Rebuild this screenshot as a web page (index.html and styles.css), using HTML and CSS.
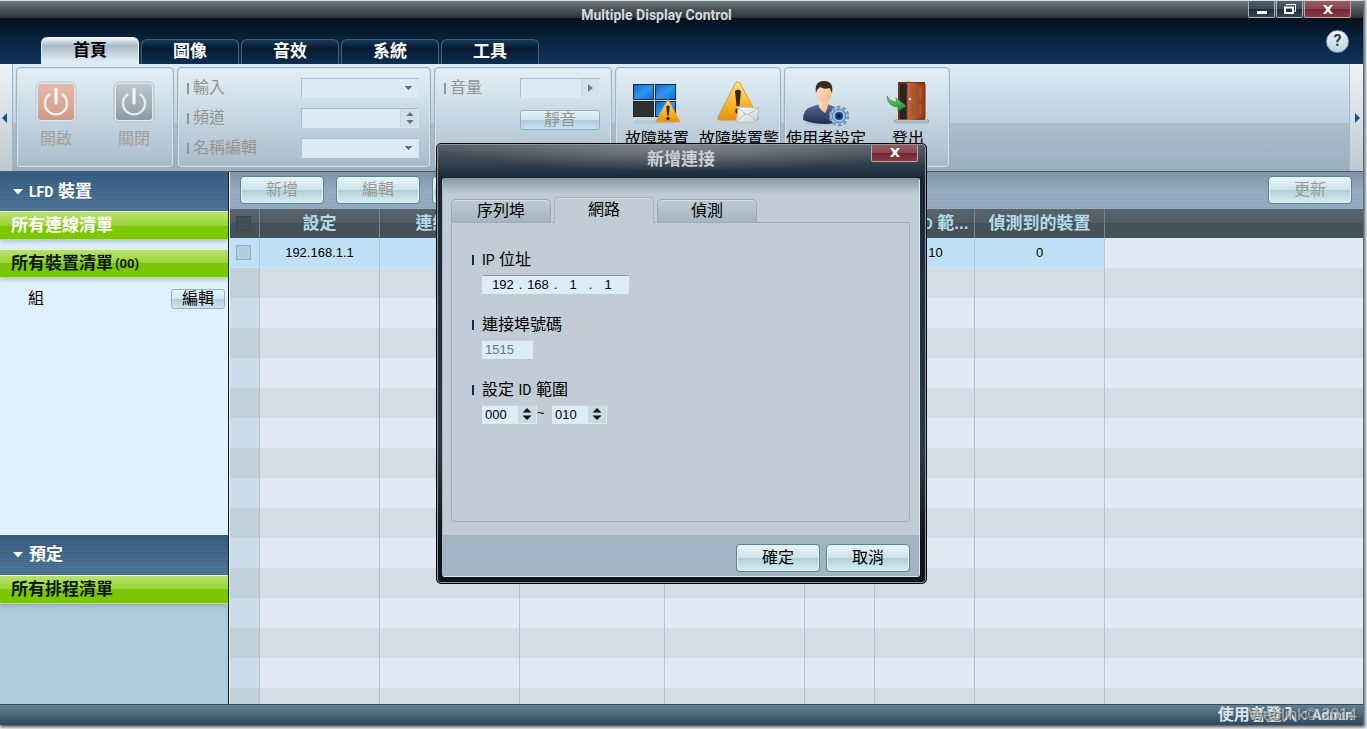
FILE: index.html
```html
<!DOCTYPE html>
<html lang="zh-Hant">
<head>
<meta charset="utf-8">
<title>Multiple Display Control</title>
<link rel="stylesheet" href="styles.css">
</head>
<body>
<div class="app">
  <header class="titlebar">
    <h1 class="app-title">Multiple Display Control</h1>
    <div class="window-buttons">
      <button class="win-btn" aria-label="Minimize"><svg width="12" height="12" viewBox="0 0 12 12"><path d="M1 8h10v3H1z" fill="#fff"/></svg></button>
      <button class="win-btn" aria-label="Restore"><svg width="14" height="12" viewBox="0 0 14 12"><path d="M3.500 2.500V1.500H12.500V8.500H11.500" fill="none" stroke="#fff"/><path d="M2 4.500h8v5.500H2z" fill="none" stroke="#fff" stroke-width="2"/></svg></button>
      <button class="win-btn win-close" aria-label="Close"><svg width="10" height="9" viewBox="0 0 10 9"><path d="M0 0h3l2 2.500L7 0h3L6.600 4.500 10 9H7L5 6.500 3 9H0l3.400-4.500z" fill="#fff"/></svg></button>
    </div>
  </header>

  <nav class="tabbar">
    <div class="tabs">
      <button class="tab tab-active">首頁</button>
      <button class="tab">圖像</button>
      <button class="tab">音效</button>
      <button class="tab">系統</button>
      <button class="tab">工具</button>
    </div>
    <button class="help" aria-label="Help">?</button>
  </nav>

  <section class="ribbon">
    <button class="scroll scroll-left" aria-label="Previous"><svg width="5" height="10" viewBox="0 0 5 10"><path d="M5 0v10L0 5z" fill="#1a5580"/></svg></button>
    <div class="groups">
      <div class="group power-group">
        <button class="tool" disabled>
          <svg width="42" height="42" viewBox="0 0 42 42">
            <defs><linearGradient id="on" x2="0" y2="1"><stop stop-color="#e6bba5"/><stop offset="1" stop-color="#d0988a"/></linearGradient></defs>
            <rect x="1" y="1" width="40" height="40" rx="5" fill="#dce6ec" stroke="#bccad4"/>
            <rect x="3" y="3" width="36" height="36" rx="3" fill="url(#on)"/>
            <path d="M14.500 13.500a11 11 0 1 0 13 0" fill="none" stroke="#f5eeec" stroke-width="2.500" stroke-linecap="round"/>
            <path d="M21 8v14" stroke="#fff" stroke-width="3" stroke-linecap="round"/>
          </svg>
          <span>開啟</span>
        </button>
        <button class="tool" disabled>
          <svg width="42" height="42" viewBox="0 0 42 42">
            <defs><linearGradient id="off" x2="0" y2="1"><stop stop-color="#bcc7cf"/><stop offset="1" stop-color="#8c9aa5"/></linearGradient></defs>
            <rect x="1" y="1" width="40" height="40" rx="5" fill="#dce6ec" stroke="#b0bfca"/>
            <rect x="3" y="3" width="36" height="36" rx="3" fill="url(#off)"/>
            <path d="M14.500 13.500a11 11 0 1 0 13 0" fill="none" stroke="#e4eaee" stroke-width="2.500" stroke-linecap="round"/>
            <path d="M21 8v14" stroke="#f4f8fa" stroke-width="3" stroke-linecap="round"/>
          </svg>
          <span>關閉</span>
        </button>
      </div>

      <div class="group input-group">
        <label for="source">輸入</label>
        <select id="source" class="field drop" disabled><option></option></select>
        <label for="channel">頻道</label>
        <div class="field spin-field">
          <input id="channel" type="text" disabled>
          <span class="spin"><svg width="8" height="14" viewBox="0 0 8 14"><path d="M4 1l3.500 4h-7zM4 13l3.500-4h-7z" fill="#5f727f"/></svg></span>
        </div>
        <label for="rename">名稱編輯</label>
        <select id="rename" class="field drop" disabled><option></option></select>
      </div>

      <div class="group volume-group">
        <label for="volume">音量</label>
        <div class="field spin-field">
          <input id="volume" type="text" disabled>
          <span class="spin"><svg width="6" height="8" viewBox="0 0 6 8"><path d="M0 0l5 4-5 4z" fill="#6f7f8a"/></svg></span>
        </div>
        <button class="mute" disabled>靜音</button>
      </div>

      <div class="group">
        <button class="tool">
          <svg width="48" height="44" viewBox="0 0 48 44">
            <defs>
              <linearGradient id="blue" x2="1" y2="1"><stop stop-color="#1560c8"/><stop offset=".5" stop-color="#2d96f2"/><stop offset="1" stop-color="#0a6fdc"/></linearGradient>
              <linearGradient id="amber" x2="0" y2="1"><stop stop-color="#ffe28a"/><stop offset=".6" stop-color="#f9b526"/><stop offset="1" stop-color="#e98a0c"/></linearGradient>
            </defs>
            <path d="M1 39h40v4H1z" fill="#aebfcb" opacity=".45"/>
            <g stroke="#14263a"><rect x=".5" y="3.500" width="20" height="15" fill="url(#blue)"/><rect x="22.500" y="3.500" width="20" height="15" fill="url(#blue)"/><rect x=".5" y="20.500" width="20" height="15" fill="#303030"/><rect x="22.500" y="20.500" width="20" height="15" fill="url(#blue)"/></g>
            <path d="M35 18.500L47 41H22.500z" fill="url(#amber)" stroke="#e7a534" stroke-linejoin="round"/>
            <path d="M33.200 25.500q1.800-2 3.600 0l-1 9h-1.600z" fill="#33291b"/><circle cx="35" cy="37.500" r="1.700" fill="#33291b"/>
          </svg>
          <span>故障裝置</span>
        </button>
        <button class="tool">
          <svg width="48" height="44" viewBox="0 0 48 44">
            <defs><linearGradient id="mail" x2="1" y2="1"><stop stop-color="#fff"/><stop offset="1" stop-color="#c9d1d8"/></linearGradient></defs>
            <path d="M6 40l5 3 4-3 8 3h15l4-3z" fill="#d2c9a8" opacity=".55"/>
            <path d="M22 1q2-1 3 1l18 34q1 3-1 3H4q-2 0-1-3L20 3z" fill="url(#amber)" stroke="#d99b35"/>
            <path d="M20 10q3-3 6 0l-1.500 15h-3z" fill="#342817"/><circle cx="23" cy="30" r="2.700" fill="#342817"/>
            <path d="M23 26l21 1-2 12q-1 2-3 2H21q2-8 2-15z" fill="url(#mail)" stroke="#b8c0c6"/>
            <path d="M23 27l9 7 12-7M21 41l9-8M41 40l-7-7" fill="none" stroke="#b4bcc2"/>
          </svg>
          <span>故障裝置警</span>
        </button>
      </div>

      <div class="group">
        <button class="tool">
          <svg width="48" height="46" viewBox="0 0 48 46">
            <defs>
              <linearGradient id="coat" x2="0" y2="1"><stop stop-color="#5a6e95"/><stop offset="1" stop-color="#1d2c50"/></linearGradient>
              <linearGradient id="skin" x2="1" y2="1"><stop stop-color="#ffe6c4"/><stop offset="1" stop-color="#eeb787"/></linearGradient>
            </defs>
            <ellipse cx="20" cy="42" rx="17" ry="3" fill="#99aec0" opacity=".4"/>
            <path d="M1 39q0-11 8-13l8-3h8l8 3q6 3 7 13-7 4-17 4-12 0-22-4z" fill="url(#coat)"/>
            <path d="M17 18h9v6q-1 6-3 8-6-4-7-9z" fill="url(#skin)"/>
            <ellipse cx="22" cy="12" rx="7.500" ry="10" fill="url(#skin)"/>
            <path d="M14 12Q12 0 22 0q10 0 8 12-1-1-2-5-6 2-10-1-3 2-4 6z" fill="#3c2b20"/>
            <circle cx="37" cy="35" r="9" fill="#dae5ee" stroke="#8097aa" stroke-width="2.500" stroke-dasharray="3.700 2"/>
            <circle cx="37" cy="35" r="7" fill="#8dbde8" stroke="#3a78b2"/><circle cx="37" cy="35" r="4" fill="#1d4677"/><circle cx="37" cy="35" r="2" fill="#0b1c31"/>
          </svg>
          <span>使用者設定</span>
        </button>
        <button class="tool">
          <svg width="44" height="44" viewBox="0 0 44 44">
            <defs>
              <linearGradient id="wood" x2="1" y2="0"><stop stop-color="#c86c3e"/><stop offset="1" stop-color="#8b3a1b"/></linearGradient>
              <linearGradient id="leaf" x2="0" y2="1"><stop stop-color="#7ae07d"/><stop offset="1" stop-color="#13832c"/></linearGradient>
            </defs>
            <path d="M10 40h32v3H12z" fill="#a9b9c6" opacity=".5"/>
            <path d="M12 1h27v38H12z" fill="#6e3016"/><path d="M14 3h9v35h-9z" fill="#252526"/>
            <path d="M21 1l18 2v34l-18 3z" fill="url(#wood)" stroke="#86371a"/>
            <path d="M25 5l4 .5v12.500L25 19zM33 6l3 .5v11.500L33 18zM25 24l4-.5V34l-4 .5zM33 23h3v10l-3 .5z" fill="#aa5530"/>
            <circle cx="24" cy="18" r="1.300" fill="#fbe4ba"/>
            <path d="M9 39h33l1 2H8z" fill="#d9dde1" stroke="#77848f" stroke-width=".7"/>
            <path d="M1 15q3 6 10 6l-1-4 10 8-8 5v-4Q2 26 1 15z" fill="url(#leaf)" stroke="#2b8d3b" stroke-width=".7"/>
          </svg>
          <span>登出</span>
        </button>
      </div>
    </div>
    <button class="scroll scroll-right" aria-label="Next"><svg width="5" height="10" viewBox="0 0 5 10"><path d="M0 0v10l5-5z" fill="#1a5580"/></svg></button>
  </section>

  <div class="workspace">
    <aside class="sidebar">
      <section class="devices">
        <h2 class="side-title"><svg width="10" height="6" viewBox="0 0 10 6"><path d="M0 0h10L5 5.500z" fill="#fff"/></svg><span><span class="latin">LFD</span> 裝置</span></h2>
        <a class="green green-light" href="#">所有連線清單</a>
        <a class="green" href="#">所有裝置清單<span class="count">(00)</span></a>
        <div class="group-row"><span>組</span><button class="small-btn">編輯</button></div>
      </section>
      <section class="schedule">
        <h2 class="side-title"><svg width="10" height="6" viewBox="0 0 10 6"><path d="M0 0h10L5 5.500z" fill="#fff"/></svg>預定</h2>
        <a class="green" href="#">所有排程清單</a>
      </section>
    </aside>

    <main class="content">
      <div class="toolbar">
        <button class="btn" disabled>新增</button>
        <button class="btn" disabled>編輯</button>
        <button class="btn" disabled>刪除</button>
        <button class="btn refresh" disabled>更新</button>
      </div>
      <div class="table-wrap">
        <table class="grid">
          <colgroup><col class="c30"><col class="c120"><col class="c140"><col class="c145"><col class="c140"><col class="c70"><col class="c100"><col class="c130"><col></colgroup>
          <thead><tr><th><input type="checkbox" aria-label="全選" disabled></th><th>設定</th><th>連線類型</th><th></th><th></th><th></th><th>設定 <span class="latin">ID</span> 範...</th><th>偵測到的裝置</th><th></th></tr></thead>
          <tbody>
            <tr class="selected"><td><input type="checkbox" aria-label="192.168.1.1" disabled></td><td>192.168.1.1</td><td></td><td></td><td></td><td></td><td>0 ~ 10</td><td>0</td><td></td></tr>
            <tr><td></td><td></td><td></td><td></td><td></td><td></td><td></td><td></td><td></td></tr>
            <tr><td></td><td></td><td></td><td></td><td></td><td></td><td></td><td></td><td></td></tr>
            <tr><td></td><td></td><td></td><td></td><td></td><td></td><td></td><td></td><td></td></tr>
            <tr><td></td><td></td><td></td><td></td><td></td><td></td><td></td><td></td><td></td></tr>
            <tr><td></td><td></td><td></td><td></td><td></td><td></td><td></td><td></td><td></td></tr>
            <tr><td></td><td></td><td></td><td></td><td></td><td></td><td></td><td></td><td></td></tr>
            <tr><td></td><td></td><td></td><td></td><td></td><td></td><td></td><td></td><td></td></tr>
            <tr><td></td><td></td><td></td><td></td><td></td><td></td><td></td><td></td><td></td></tr>
            <tr><td></td><td></td><td></td><td></td><td></td><td></td><td></td><td></td><td></td></tr>
            <tr><td></td><td></td><td></td><td></td><td></td><td></td><td></td><td></td><td></td></tr>
            <tr><td></td><td></td><td></td><td></td><td></td><td></td><td></td><td></td><td></td></tr>
            <tr><td></td><td></td><td></td><td></td><td></td><td></td><td></td><td></td><td></td></tr>
            <tr><td></td><td></td><td></td><td></td><td></td><td></td><td></td><td></td><td></td></tr>
            <tr><td></td><td></td><td></td><td></td><td></td><td></td><td></td><td></td><td></td></tr>
            <tr><td></td><td></td><td></td><td></td><td></td><td></td><td></td><td></td><td></td></tr>
          </tbody>
        </table>
      </div>
    </main>
  </div>

  <footer class="statusbar">
    <span class="login">使用者登入 : <span class="latin">Admin</span></span>
    <span class="watermark">Weblink© 2014</span>
  </footer>

  <div class="overlay">
    <form class="dialog" role="dialog" aria-labelledby="dialog-title">
      <div class="dialog-head">
        <h2 id="dialog-title">新增連接</h2>
        <button type="button" class="win-btn win-close dialog-close" aria-label="關閉"><svg width="10" height="9" viewBox="0 0 10 9"><path d="M0 0h3l2 2.500L7 0h3L6.600 4.500 10 9H7L5 6.500 3 9H0l3.400-4.500z" fill="#fff"/></svg></button>
      </div>
      <div class="dialog-inner">
        <div class="dialog-body">
          <div class="dtabs">
            <button type="button" class="dtab">序列埠</button>
            <button type="button" class="dtab dtab-active">網路</button>
            <button type="button" class="dtab">偵測</button>
          </div>
          <div class="panel">
            <div class="form-row">
              <label for="ip1"><span class="latin">IP</span> 位址</label>
              <div class="ip">
                <input id="ip1" value="192"><span>.</span><input aria-label="IP 2" value="168"><span>.</span><input aria-label="IP 3" value="1"><span>.</span><input aria-label="IP 4" value="1">
              </div>
            </div>
            <div class="form-row">
              <label for="port">連接埠號碼</label>
              <input id="port" class="port" value="1515" disabled>
            </div>
            <div class="form-row">
              <label for="from">設定 <span class="latin">ID</span> 範圍</label>
              <div class="range">
                <div class="num"><input id="from" value="000"><span class="num-spin"><svg width="10" height="14" viewBox="0 0 10 14"><path d="M5 1l4.500 4.500h-9zM5 13l4.500-4.500h-9z" fill="#0c1418"/></svg></span></div>
                <span class="tilde">~</span>
                <div class="num"><input aria-label="ID" value="010"><span class="num-spin"><svg width="10" height="14" viewBox="0 0 10 14"><path d="M5 1l4.500 4.500h-9zM5 13l4.500-4.500h-9z" fill="#0c1418"/></svg></span></div>
              </div>
            </div>
          </div>
        </div>
        <div class="dialog-foot">
          <button type="button" class="btn">確定</button>
          <button type="button" class="btn">取消</button>
        </div>
      </div>
    </form>
  </div>
</div>
</body>
</html>
```

FILE: styles.css
```css
* { box-sizing: border-box; }

body {
  margin: 0;
  padding: 0 4px 4px 0;
  height: 100vh;
  overflow: hidden;
  background: #f2f3f4;
  font-family: "Liberation Sans", "Noto Sans CJK TC", sans-serif;
  font-size: 16px;
  line-height: 20px;
  color: #000;
}

button, input, select { font: inherit; color: inherit; margin: 0; padding: 0; border: 0; }
h1, h2 { margin: 0; font-size: 17px; }
svg { display: block; flex: none; }
a { color: inherit; text-decoration: none; }
.latin { font-family: Roboto, sans-serif; font-size: 14px; }

.app {
  position: relative;
  display: flex;
  flex-direction: column;
  height: 100%;
  border-top: 1px solid #d4e2e8;
  box-shadow: 1px 1px 3px 1px #4c5054;
}

/* Title bar */
.titlebar {
  display: grid;
  height: 17px;
  background: linear-gradient(#727b80, #4b5357 50%, #2b3135);
}
.titlebar > * { grid-area: 1 / 1; }
.app-title {
  padding-right: 50px;
  text-align: center;
  font: bold 14px/28px Roboto, sans-serif;
  color: #d5dadd;
  z-index: 1;
}
.window-buttons { display: flex; justify-self: end; gap: 1px; margin-right: 12px; z-index: 2; }
.win-btn {
  display: flex;
  align-items: center;
  justify-content: center;
  width: 27px;
  height: 17px;
  border: 1px solid #a7b2ba;
  border-top: 0;
  border-radius: 0 0 2px 2px;
  background: linear-gradient(#52606c, #3a4855 50%, #1e2c38 50%, #344351);
}
.win-close { width: 47px; background: linear-gradient(#9a5a62, #8a4750 50%, #6f2730 50%, #8b3b45); border-color: #c0a2a6; }

/* Main tabs */
.tabbar {
  display: flex;
  justify-content: space-between;
  align-items: flex-end;
  height: 46px;
  padding: 0 14px 0 41px;
  background: linear-gradient(#03101c, #0a2747 60%, #0f3459);
}
.tabs { display: flex; align-items: flex-end; gap: 2px; }
.tab {
  width: 98px;
  height: 25px;
  border: 1px solid #44617c;
  border-bottom: 0;
  border-radius: 6px 6px 0 0;
  background: linear-gradient(#1b3a59, #061a30 35%, #0d2f51);
  color: #fff;
  font-size: 17px;
  font-weight: bold;
  line-height: 20px;
}
.tab-active { height: 27px; border-color: #e5f0f6; background: linear-gradient(#f0f7fa, #a9bac7 30%, #dce8f0 85%, #dcedf7); color: #000; }
.help {
  align-self: center;
  width: 23px;
  height: 23px;
  border: 1px solid #83a0b3;
  border-radius: 50%;
  background: linear-gradient(#f3f8fa, #bfd0da);
  color: #33444f;
  font: bold 16px/20px Roboto, sans-serif;
}

/* Ribbon */
.ribbon {
  display: flex;
  height: 107px;
  background: linear-gradient(#dcedf7, #bccfdd 55%, #adbecb 55%, #9bafbe);
}
.groups { display: flex; flex: 1; gap: 3px; padding: 3px 0 3px 3px; }
.scroll { display: flex; align-items: center; width: 13px; background: linear-gradient(#ecf4f8, #bdc9d2); }
.scroll-left { padding-left: 2px; border-right: 1px solid #a4b6c4; }
.scroll-right { width: 14px; padding-left: 5px; border-left: 1px solid #a4b6c4; }
.group {
  display: flex;
  border: 1px solid #a0b3c2;
  border-radius: 4px;
  box-shadow: inset 0 0 0 1px #d2e1ea;
  background: linear-gradient(#e3f0f7, #c3d4e0 55%, #a9bbc9);
}
.tool {
  display: flex;
  flex-direction: column;
  align-items: center;
  justify-content: space-between;
  width: 82px;
  height: 81px;
  padding-top: 13px;
  background: none;
  white-space: nowrap;
}
.tool span { line-height: 20px; }
.tool:disabled { color: #a19f98; }
.power-group .tool { width: 78px; }
.input-group {
  display: grid;
  grid-template-columns: 114px 118px;
  grid-auto-rows: 30px;
  align-items: center;
  width: 254px;
  padding: 5px 9px;
}
.ribbon label { display: flex; align-items: center; gap: 4px; color: #96968f; }
.ribbon label::before { content: ""; width: 2px; height: 11px; background: #8b969e; }
.field {
  height: 20px;
  border: 1px solid #a9bfce;
  border-right-color: #d8e6ef;
  border-bottom-color: #d8e6ef;
  background-color: #dceaf6;
}
.drop {
  appearance: none;
  width: 118px;
  background-image: linear-gradient(to bottom right, #5f727f 50%, transparent 50%), linear-gradient(to bottom left, #5f727f 50%, transparent 50%);
  background-position: right 5px center, right 9px center;
  background-size: 4px 4px;
  background-repeat: no-repeat;
  opacity: 1;
}
.spin-field { display: flex; }
.spin-field input { flex: 1; min-width: 0; background: none; }
.spin { display: flex; align-items: center; justify-content: center; width: 18px; border-left: 1px solid #c6d5df; background: #d3e0e9; }
.volume-group {
  display: grid;
  grid-template-columns: 76px 80px;
  grid-template-rows: 30px 34px;
  align-items: center;
  width: 178px;
  padding: 5px 9px;
}
.mute {
  grid-column: 2;
  height: 20px;
  border: 1px solid #8eb1c4;
  border-radius: 3px;
  background: linear-gradient(#e2f0f7, #d2e6ef 50%, #accbdb 50%, #c5e2ee);
  color: #96968f;
  line-height: 18px;
}

/* Workspace */
.workspace { display: flex; flex: 1; min-height: 0; border-top: 1px solid #4c6072; }
.sidebar { display: flex; flex-direction: column; width: 229px; border-right: 1px solid #10181e; background: #dff1ff; }
.devices { flex: 1; }
.schedule { height: 169px; background: #b0cbd9; }
.side-title {
  display: flex;
  align-items: center;
  gap: 6px;
  height: 39px;
  padding-left: 13px;
  background: repeating-linear-gradient(transparent 0 1px, rgba(20, 50, 80, .16) 1px 2px), linear-gradient(#375f84, #54799b);
  color: #fff;
}
.schedule .side-title { height: 40px; }
.green {
  display: flex;
  align-items: center;
  height: 29px;
  padding-left: 11px;
  border-top: 1px solid #e8f5c8;
  border-bottom: 1px solid #b9dc8c;
  background: linear-gradient(#b9e26f, #98d336 50%, #7cc807 50%, #7ac700);
  box-shadow: 0 2px 4px rgba(90, 120, 140, .35);
  color: #0b1a02;
  font-size: 17px;
  font-weight: bold;
}
.green-light { margin-bottom: 9px; color: #fff; }
.count { padding-left: 2px; font: bold 13px/20px Roboto, sans-serif; }
.group-row { display: flex; align-items: center; justify-content: space-between; padding: 11px 3px 0 28px; }
.small-btn {
  width: 54px;
  height: 20px;
  border: 1px solid #8fb2c5;
  border-radius: 3px;
  background: linear-gradient(#e9f4f9, #d4e7f0 50%, #b0cddb 50%, #cfe5ef);
  line-height: 18px;
}

.content { display: flex; flex: 1; flex-direction: column; min-width: 0; padding-left: 1px; }
.toolbar {
  display: flex;
  gap: 12px;
  height: 37px;
  padding: 4px 11px 0 10px;
  background: repeating-linear-gradient(transparent 0 1px, rgba(70, 100, 130, .12) 1px 2px), linear-gradient(#8496a6, #9aafc5 50%);
}
.btn {
  width: 84px;
  height: 28px;
  border: 1px solid #55858f;
  border-radius: 4px;
  background: linear-gradient(#e8f5fa, #cbe2eb 50%, #b2ced8 51%, #d5f0f5);
  box-shadow: inset 0 0 0 1px #e3f3f8;
  line-height: 26px;
}
.btn:disabled { color: #9b9b92; }
.refresh { margin-left: auto; }

.table-wrap { flex: 1; min-height: 0; overflow: hidden; }
.grid { width: 100%; border-collapse: separate; border-spacing: 0; table-layout: fixed; }
.c30 { width: 30px; }
.c70 { width: 70px; }
.c100 { width: 100px; }
.c120 { width: 120px; }
.c130 { width: 130px; }
.c140 { width: 140px; }
.c145 { width: 145px; }
.grid th {
  height: 29px;
  padding: 0;
  border-right: 1px solid #78858c;
  background: linear-gradient(#59646a, #515d63 50%, #455158 50%, #455259);
  color: #b2dbea;
  font-size: 17px;
  white-space: nowrap;
}
.grid td { height: 30px; padding: 0; border-right: 1px solid #b3c3cf; background: #e0eaf5; text-align: center; font-size: 13px; }
.grid tr > :last-child { border-right: 0; }
.grid td:first-child { background: #cadcea; }
.grid tbody tr:nth-child(even) td { background: #d3dde6; }
.grid tbody tr:nth-child(even) td:first-child { background: #bfd0da; }
.grid .selected td:not(:last-child) { border-bottom: 1px solid #cbe5f5; background: #bfe1f8; }
.grid input { appearance: none; display: block; width: 15px; height: 15px; margin: 0 6px; border: 1px solid #93aebd; background: #b1cfdf; }
.grid th input { border-color: #3b474d; background: #424e54; }

/* Status bar */
.statusbar {
  display: grid;
  height: 21px;
  border-top: 1px solid #34495a;
  background: linear-gradient(#65808f, #2d485c);
  white-space: nowrap;
}
.statusbar > * { grid-area: 1 / 1; justify-self: end; line-height: 20px; }
.login { padding-right: 10px; color: #dce6ed; font-weight: bold; }
.watermark { padding-right: 6px; color: #b9bdbf; text-shadow: 1px 1px 1px #4b5257; font-family: "Liberation Sans", sans-serif; opacity: .85; }

/* Dialog */
.overlay { position: absolute; inset: 0; display: grid; place-items: center; pointer-events: none; }
.dialog {
  width: 491px;
  padding: 1px 6px 6px 5px;
  border: 1px solid #000;
  border-radius: 5px;
  background: linear-gradient(#5c6168, #15283a 34px, #26394a 70%, #0f161d 90%);
  box-shadow: inset 0 0 0 1px #8b98a2;
  pointer-events: auto;
}
.dialog-head {
  display: grid;
  height: 33px;
  background: radial-gradient(ellipse 50% 26px at 50% 0, rgba(150, 150, 154, .7), transparent);
}
.dialog-head > * { grid-area: 1 / 1; }
.dialog-head h2 { text-align: center; line-height: 29px; color: #c9cfd4; }
.dialog-close { justify-self: end; margin-right: 2px; }
.dialog-inner { border: 1px solid #dde7ed; border-top: 0; border-left-color: #a9b7c1; border-radius: 3px; background: #c1ccd6; }
.dialog-body { padding: 19px 9px 13px 8px; background: linear-gradient(#8796a3, #c1ccd6 16px); }
.dtabs { display: flex; align-items: flex-end; gap: 3px; }
.dtab {
  width: 100px;
  height: 23px;
  border: 1px solid #98a8b4;
  border-bottom: 0;
  border-radius: 5px 5px 0 0;
  background: linear-gradient(#c0ccd5, #a5b4c0);
  box-shadow: inset 0 1px 0 #d5dee5;
  line-height: 20px;
}
.dtab-active { height: 26px; margin-bottom: -1px; padding-bottom: 1px; border-color: #a5b4bf; background: #c1ccd6; z-index: 1; }
.panel { display: grid; gap: 15px; height: 300px; align-content: start; padding: 27px 20px; border: 1px solid #9fafba; border-radius: 0 0 4px 4px; background: #c1ccd6; }
.form-row { display: grid; gap: 5px; height: 50px; align-content: start; }
.form-row > :last-child { margin-left: 10px; }
.form-row label { white-space: pre; }
.form-row label::before { content: ""; display: inline-block; width: 2px; height: 10px; margin-right: 8px; background: #0f2c48; }
.ip, .num, .port { height: 19px; border: 1px solid #dfe9f0; border-top-color: #8796a1; background: #dcecf9; font-size: 13px; line-height: 17px; }
.ip { display: flex; width: 147px; padding: 0 6px; }
.ip input { width: 28px; background: none; text-align: center; }
.ip span { width: 8px; text-align: center; }
.port { width: 51px; padding-left: 2px; border-top-color: #c5d5e0; color: #6d7982; }
.range { display: flex; }
.num { display: flex; width: 55px; border-top-color: #c5d5e0; }
.num input { width: 35px; padding-left: 2px; background: none; }
.num-spin { display: flex; flex: 1; align-items: center; justify-content: center; background: #cbd9e0; }
.tilde { width: 15px; font-size: 13px; line-height: 16px; }
.dialog-foot { display: flex; justify-content: flex-end; gap: 6px; height: 41px; padding: 9px 9px 0 0; background: #a2b4c3; }
```
